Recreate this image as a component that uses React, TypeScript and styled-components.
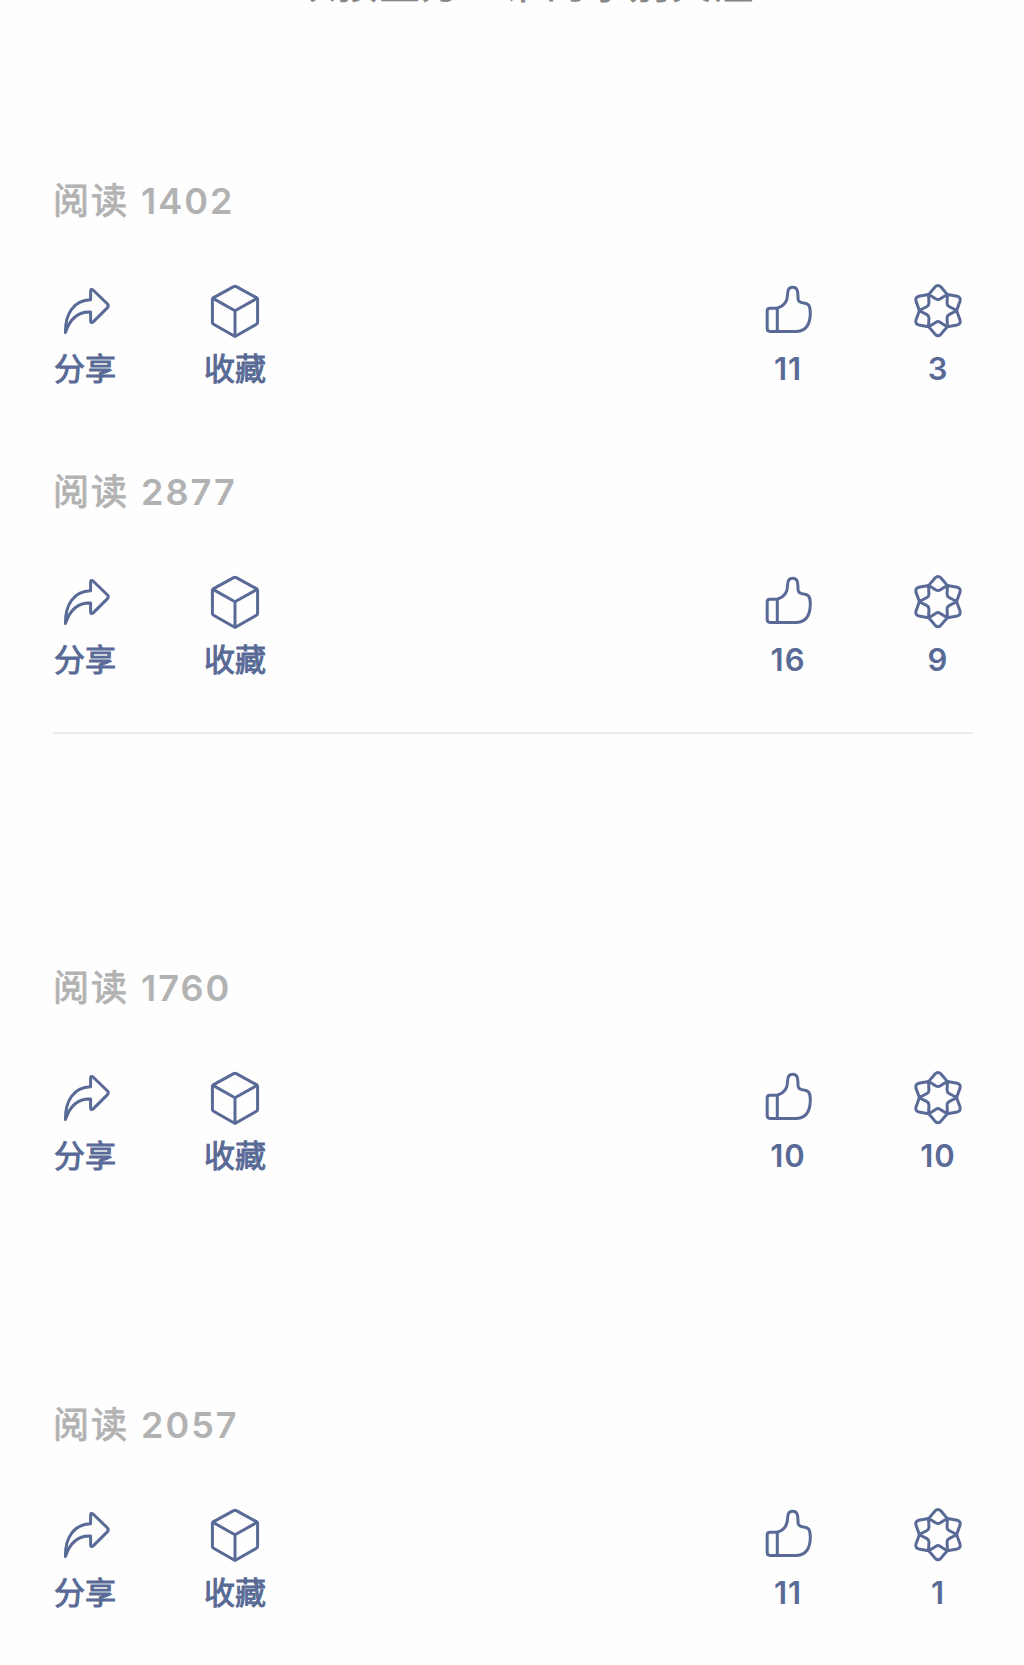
import React from 'react';
import styled, { createGlobalStyle } from 'styled-components';

const Global = createGlobalStyle`
  * { box-sizing: border-box; }
  body {
    margin: 0;
    background: #fefefe;
    font-family: Inter, "Noto Sans CJK SC", "Liberation Sans", sans-serif;
  }
`;

const Page = styled.main`
  width: 1024px;
  height: 1665px;
  overflow: hidden;
  background: #fefefe;
  padding: 0 51px 0 53px;
`;

const TitleClip = styled.header`
  height: 8px;
  display: flex;
  align-items: flex-end;
  padding-left: 243px;
`;

const Title = styled.h1`
  margin: 0;
  flex: none;
  font-size: 40px;
  line-height: 48px;
  font-weight: 400;
  letter-spacing: 1.7px;
  white-space: nowrap;
  color: #868686;
  -webkit-text-stroke: 1px currentColor;
`;

const Post = styled.section<{ $gap: number }>`
  margin-top: ${(p) => p.$gap}px;
  height: 212px;
`;

const Reads = styled.div`
  display: flex;
  gap: 12px;
  height: 50px;
  line-height: 50px;
  font-size: 36px;
  letter-spacing: 2px;
  color: #b2b2b2;
  white-space: nowrap;
`;

const ReadsLabel = styled.span`
  -webkit-text-stroke: 0.9px currentColor;
`;

const Digits = styled.span`
  font-weight: 600;
`;

const Bar = styled.div`
  display: flex;
  justify-content: space-between;
  margin-top: 55px;
  padding: 0 4.5px 0 1.5px;
`;

const Group = styled.div`
  display: flex;
  gap: 89px;
`;

const Action = styled.button`
  width: 61px;
  padding: 0;
  border: 0;
  background: none;
  font: inherit;
  color: #586a95;
  display: flex;
  flex-direction: column;
  align-items: center;
  gap: 7px;
`;

const Label = styled.span`
  line-height: 41px;
  font-size: 31px;
  font-weight: 400;
  white-space: nowrap;
  -webkit-text-stroke: 1px currentColor;
`;

const Count = styled.span`
  line-height: 41px;
  font-size: 31px;
  font-weight: 600;
  letter-spacing: 1px;
  white-space: nowrap;
`;

const Icon = styled.svg`
  display: block;
  width: 60px;
  height: 60px;
  fill: none;
  stroke: currentColor;
  stroke-width: 3;
  stroke-linejoin: round;
  stroke-linecap: round;
`;

const Divider = styled.hr`
  margin: 53px 0 0;
  border: 0;
  height: 2px;
  background: #ebebeb;
`;

const ShareIcon = () => (
  <Icon viewBox="0 0 60 60">
    <path d="M10.4 51.5C10.2 32.5 18.5 19.5 35.6 18.8V10Q35.8 7.4 38 9L52.5 23Q54 24.8 52.5 26.6L38.2 40.9Q35.8 42.7 35.6 40V31C24 30.5 15.5 36 10.4 51.5Z" />
  </Icon>
);

const CubeIcon = () => (
  <Icon viewBox="0 0 60 60">
    <path d="M28.7 5.6Q30 4.8 31.3 5.6L51.4 16.6Q52.6 17.3 52.6 18.7V41.3Q52.6 42.6 51.4 43.3L31.3 54.8Q30 55.6 28.7 54.8L8.6 43.3Q7.4 42.6 7.4 41.3V18.7Q7.4 17.3 8.6 16.6Z" />
    <path d="M8 17.4L30 29.8L52 17.4M30 29.8V55" />
  </Icon>
);

const ThumbIcon = () => (
  <Icon viewBox="0 0 60 60">
    <path d="M19.3 27.3H12Q9.2 27.3 9.2 30V47.6Q9.2 50.4 12 50.4H38.5C49 50.4 52.5 41.5 52.3 31C52.2 24 50 22.4 45.5 22Q40.2 21.5 40 17.5C40 10.5 39.6 6.2 34.8 6.2C30.6 6.2 29.6 8.8 29.6 13C29.6 20.5 26 25.2 19.3 27.3Z" />
    <path d="M19.3 27.3V50.4" />
  </Icon>
);

const StarIcon = () => (
  <Icon viewBox="0 0 60 60">
    {[0, 60, 120, 180, 240, 300].map((angle) => (
      <path
        key={angle}
        transform={`rotate(${angle} 30 29.6)`}
        d="M20.8 13.4L27.2 5.8Q30 3 32.8 5.8L39.2 13.4L32 18Q30 19.2 28 18Z"
      />
    ))}
  </Icon>
);

interface PostProps {
  gap: number;
  reads: number;
  likes: number;
  wows: number;
}

const PostStats = ({ gap, reads, likes, wows }: PostProps) => (
  <Post $gap={gap}>
    <Reads>
      <ReadsLabel>阅读</ReadsLabel>
      <Digits>{reads}</Digits>
    </Reads>
    <Bar>
      <Group>
        <Action>
          <ShareIcon />
          <Label>分享</Label>
        </Action>
        <Action>
          <CubeIcon />
          <Label>收藏</Label>
        </Action>
      </Group>
      <Group>
        <Action>
          <ThumbIcon />
          <Count>{likes}</Count>
        </Action>
        <Action>
          <StarIcon />
          <Count>{wows}</Count>
        </Action>
      </Group>
    </Bar>
  </Post>
);

export default function App() {
  return (
    <>
      <Global />
      <Page>
        <TitleClip>
          <Title>以按里方一谁的永别关注</Title>
        </TitleClip>
        <PostStats gap={168} reads={1402} likes={11} wows={3} />
        <PostStats gap={79} reads={2877} likes={16} wows={9} />
        <Divider />
        <PostStats gap={229} reads={1760} likes={10} wows={10} />
        <PostStats gap={225} reads={2057} likes={11} wows={1} />
      </Page>
    </>
  );
}
